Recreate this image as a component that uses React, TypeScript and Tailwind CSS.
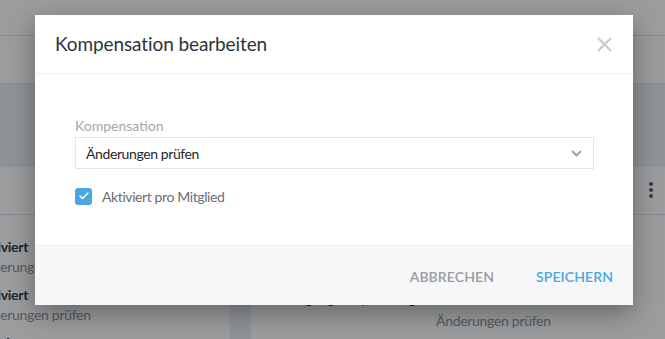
import { Check } from "lucide-react";

const leftItems = [
  { title: "Aktiviert", sub: "Änderungen prüfen" },
  { title: "Aktiviert", sub: "Änderungen prüfen" },
  { title: "Inaktiv", sub: "Änderungen prüfen" },
];

export default function App() {
  return (
    <div className="relative w-[665px] h-[339px] overflow-hidden bg-[#eceef2] font-['Lato',sans-serif]">
      {/* Page behind the dialog */}
      <div className="h-[36px] bg-white border-b border-[#dfe2e6]" />
      <div className="h-[48px] bg-white border-b border-[#dfe2e6]" />
      <div className="h-[82px] bg-[#eceef2] border-b border-[#dfe2e6]" />
      <div className="h-[49px] bg-white border-b border-[#dfe2e6] flex items-center justify-end pr-[12px]">
        <div className="flex flex-col gap-[2px]">
          <span className="w-[4px] h-[4px] rounded-full bg-[#555a61]" />
          <span className="w-[4px] h-[4px] rounded-full bg-[#555a61]" />
          <span className="w-[4px] h-[4px] rounded-full bg-[#555a61]" />
        </div>
      </div>
      <div className="flex gap-[21px] h-[200px]">
        <div className="w-[230px] bg-white pt-[22px] flex flex-col gap-[8px] text-[14px] leading-[20px] tracking-[-0.3px]">
          {leftItems.map((it, i) => (
            <div key={i} className="-ml-[24px]">
              <div className="font-bold text-[#2d3136]">{it.title}</div>
              <div className="text-[#8a8d92]">{it.sub}</div>
            </div>
          ))}
        </div>
        <div className="flex-1 bg-white pl-[20px] pt-[74px] text-[14px] leading-[20px] tracking-[-0.3px]">
          <div className="flex">
            <div className="w-[165px] text-[#2d3136]">Kündigung Hauptvertrag</div>
            <div>
              <div className="font-bold text-[#2d3136]">Aktiviert</div>
              <div className="text-[#8a8d92] mt-[2px]">Änderungen prüfen</div>
            </div>
          </div>
        </div>
      </div>

      {/* Overlay */}
      <div className="absolute inset-0 bg-[rgba(15,18,24,0.42)]" />

      {/* Dialog */}
      <div className="absolute left-[35px] top-[15px] w-[598px] bg-white shadow-[0_8px_24px_rgba(0,0,0,0.35)]">
        <div className="h-[59px] flex items-center justify-between pl-[20px] pr-[21px] border-b border-[#eef0f2]">
          <span className="text-[19px] text-[#2f3338] tracking-[-0.1px]">Kompensation bearbeiten</span>
          <svg width="15" height="15" viewBox="0 0 15 15" className="mt-[1px]">
            <path d="M1 1L14 14M14 1L1 14" stroke="#c8c9cb" strokeWidth="2" fill="none" />
          </svg>
        </div>

        <div className="pt-[43px] pb-[40px] pl-[40px] pr-[39px]">
          <div className="text-[14px] leading-[17px] text-[#a5a7aa]">Kompensation</div>
          <div className="mt-[3px] h-[32px] border border-[#e4e6e8] flex items-center justify-between pl-[10px] pr-[11px]">
            <span className="text-[14px] text-[#24272b] tracking-[-0.4px]">Änderungen prüfen</span>
            <svg width="11" height="7" viewBox="0 0 11 7">
              <path d="M1 1L5.5 5.5L10 1" stroke="#9a9ca0" strokeWidth="1.8" fill="none" />
            </svg>
          </div>
          <div className="mt-[18px] h-[18px] flex items-center gap-[10px]">
            <span className="w-[17px] h-[17px] rounded-[3px] bg-[#4ba6e1] flex items-center justify-center">
              <Check className="w-[12px] h-[12px] text-white" strokeWidth={3} />
            </span>
            <span className="text-[14px] text-[#6b6e73] tracking-[-0.4px]">Aktiviert pro Mitglied</span>
          </div>
        </div>

        <div className="h-[60px] bg-[#f6f7f9] border-t border-[#eef0f2] flex items-center justify-end gap-[42px] pr-[20px] pt-[2px]">
          <button className="text-[14px] font-semibold text-[#9b9da1] tracking-[0.1px]">ABBRECHEN</button>
          <button className="text-[14px] font-semibold text-[#4ba6e1] tracking-[0.1px]">SPEICHERN</button>
        </div>
      </div>
    </div>
  );
}
